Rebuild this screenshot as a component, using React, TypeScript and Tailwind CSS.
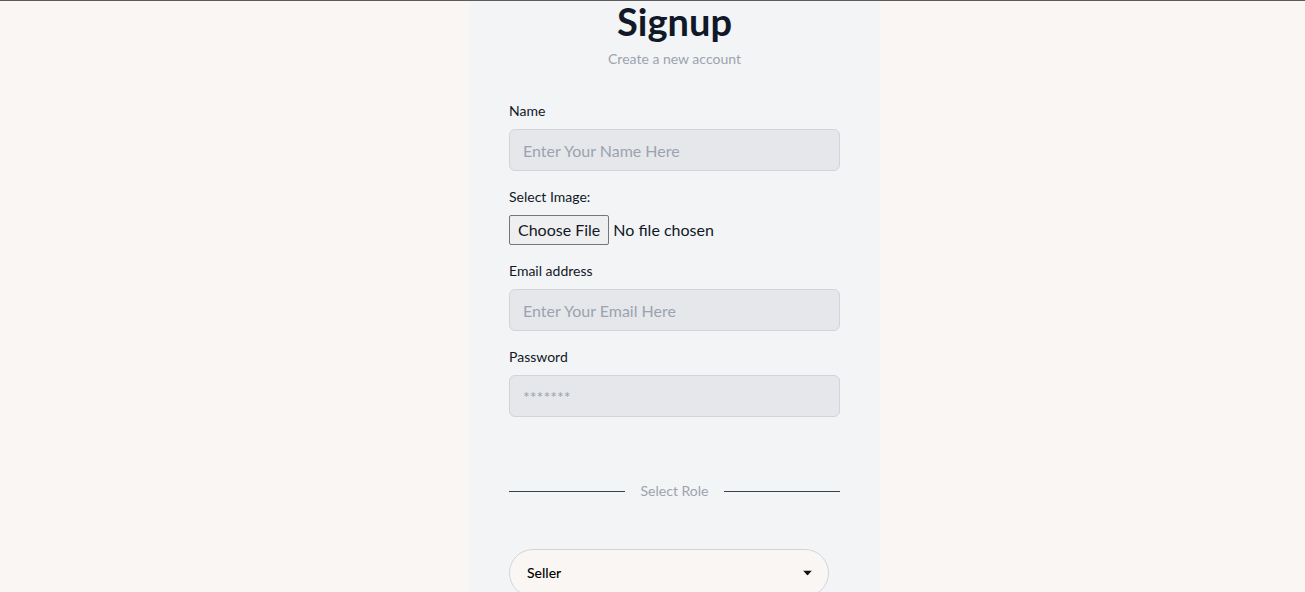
import React from "react";

export default function App() {
  return (
    <div className="min-h-[592px] bg-[#faf6f3] font-['Lato','Noto_Sans',sans-serif] text-[#111827]">
      <div className="h-px bg-[#5b5b5b]" />
      <div className="flex justify-center pl-[45px]">
        <div className="flex w-[410px] flex-col bg-[#f3f4f6] pb-10 pl-[39px] pr-[40px]">
          <h1 className="mt-[2px] text-center text-[38px] font-bold leading-[36px] text-[#111827]">Signup</h1>
          <p className="mt-[10px] text-center text-sm leading-5 text-[#9ca3af]">Create a new account</p>

          <label className="mt-8 text-sm leading-5 text-[#111827]">Name</label>
          <input
            type="text"
            placeholder="Enter Your Name Here"
            className="mt-2 h-[42px] w-[331px] rounded-md border border-[#d1d5db] bg-[#e5e7eb] px-[13px] text-base placeholder:text-[#9ca3af] outline-none"
          />

          <label className="mt-4 text-sm leading-5 text-[#111827]">Select Image:</label>
          <input
            type="file"
            className="mt-2 text-base leading-6 text-[#111827] file:mr-1 file:rounded-[2px] file:border file:border-[#767676] file:bg-[#efefef] file:px-2 file:py-[2px] file:text-[#111827]"
          />

          <label className="mt-4 text-sm leading-5 text-[#111827]">Email address</label>
          <input
            type="email"
            placeholder="Enter Your Email Here"
            className="mt-2 h-[42px] w-[331px] rounded-md border border-[#d1d5db] bg-[#e5e7eb] px-[13px] text-base placeholder:text-[#9ca3af] outline-none"
          />

          <label className="mt-4 text-sm leading-5 text-[#111827]">Password</label>
          <input
            type="password"
            placeholder="*******"
            className="mt-2 h-[42px] w-[331px] rounded-md border border-[#d1d5db] bg-[#e5e7eb] px-[13px] text-base placeholder:text-[#9ca3af] outline-none"
          />

          <div className="mt-[64px] flex items-center">
            <div className="h-px flex-1 bg-[#374151]" />
            <span className="mx-4 text-sm leading-5 text-[#9ca3af]">Select Role</span>
            <div className="h-px flex-1 bg-[#374151]" />
          </div>

          <div className="relative mt-[48px] w-[320px]">
            <select className="h-[48px] w-full appearance-none rounded-full border border-[#d1d5db] bg-[#faf6f3] pl-[17px] pr-8 text-sm font-medium text-black outline-none">
              <option>Seller</option>
              <option>Buyer</option>
            </select>
            <svg
              className="pointer-events-none absolute right-[17px] top-1/2 -translate-y-1/2"
              width="9"
              height="5"
              viewBox="0 0 9 5"
            >
              <path d="M0 0h9L4.5 5z" fill="#111" />
            </svg>
          </div>
        </div>
      </div>
    </div>
  );
}
